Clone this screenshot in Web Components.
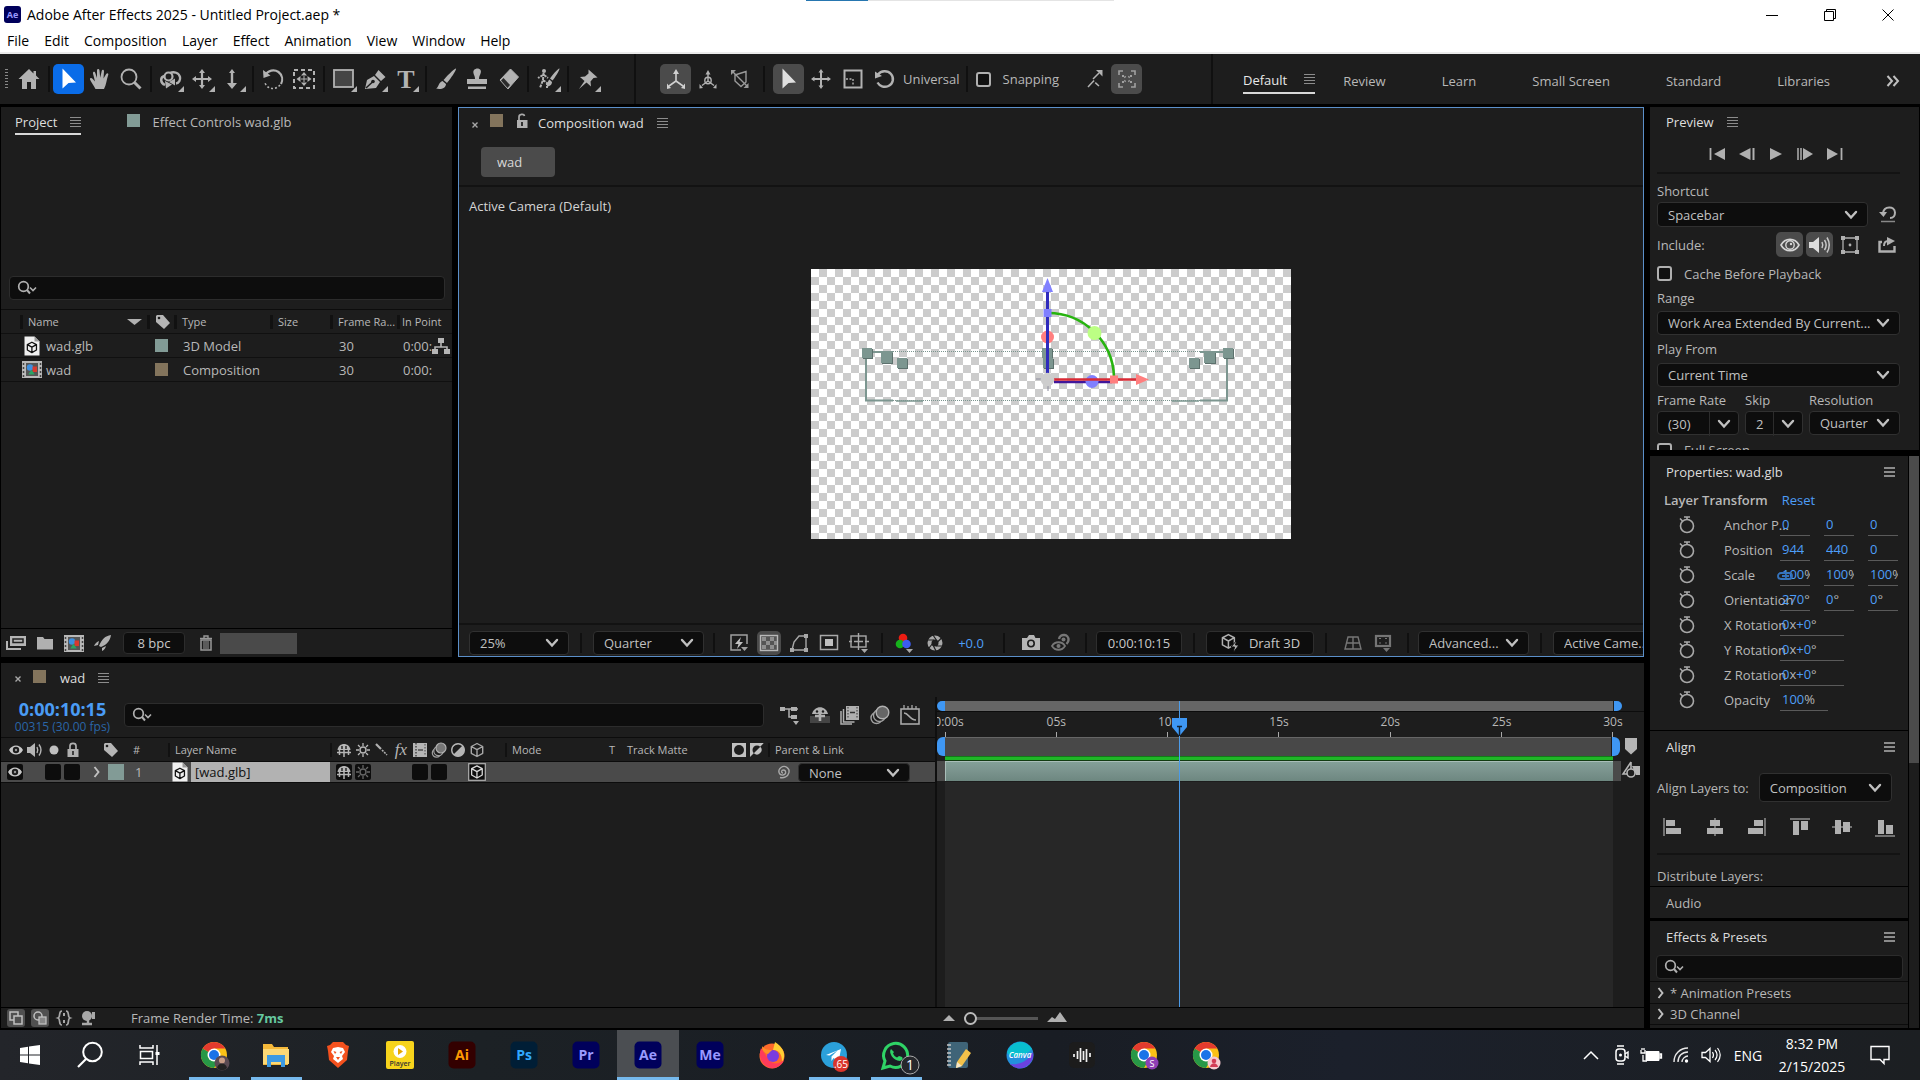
<!DOCTYPE html>
<html lang="en">
<head>
<meta charset="utf-8">
<title>Adobe After Effects 2025 - Untitled Project.aep *</title>
<style>
html,body{height:100%;margin:0}
body{background:#000;font-family:"Open Sans","Noto Sans",sans-serif;font-size:13px;color:#b8b8b8;overflow:hidden}
</style>
</head>
<body>
<ae-app></ae-app>
<script>
const BASE = `
*{box-sizing:border-box}
:host{display:block;min-width:0}
button,input,select{font:inherit;color:inherit;background:none;border:0;padding:0;margin:0;outline:0}
button{display:inline-flex;align-items:center;justify-content:center;white-space:nowrap}
ui-icon{flex:none}
`;
function define(name, css, html) {
  customElements.define(name, class extends HTMLElement {
    constructor() {
      super();
      this.attachShadow({ mode: 'open' });
    }
    connectedCallback() {
      const t = document.createElement('template');
      const body = typeof html === 'function' ? html(this) : html;
      t.innerHTML = `<style>${BASE}${css}</style>${body}`;
      this.shadowRoot.replaceChildren(t.content.cloneNode(true));
    }
  });
}

/* ---------- icons: [viewBox width, viewBox height, markup] ---------- */
const G = '#b2b2b2';
const more = `<path d="M27 21v6h-6z" fill="${G}"/>`;
const cube = (c, w = 1.4) => `<path d="M8 1.5l5.7 3v6.8L8 14.5l-5.7-3.2V4.500zM2.300 4.500L8 7.600l5.700-3.100M8 7.600v6.900" fill="none" stroke="${c}" stroke-width="${w}" stroke-linejoin="round"/>`;
const chromeMark = `<circle cx="14" cy="14" r="13" fill="#fbc116"/><path d="M14 14L2.700 7.500A13 13 0 0 0 14 27l5.600-9.700z" fill="#279847"/><path d="M14 14L2.700 7.500A13 13 0 0 1 25.300 7.500H14z" fill="#e33b2e"/><circle cx="14" cy="14" r="6.500" fill="#fff"/><circle cx="14" cy="14" r="5" fill="#1a73e8"/>`;
const adobe = (t, bg, fg) => `<rect x=".5" y=".5" width="27" height="27" rx="5" fill="${bg}"/><text x="14" y="19" text-anchor="middle" font-size="14" font-weight="700" fill="${fg}">${t}</text>`;
const film = `<rect x="0" y="0" width="20" height="17" fill="#b8b8b8"/><rect x="4" y="2" width="12" height="13" fill="#555"/><path d="M1.500 2v14M18.500 2v14" stroke="#444" stroke-width="1.500" stroke-dasharray="2 2"/><circle cx="8" cy="6.500" r="3.200" fill="#3d8fe0"/><rect x="10.500" y="5.500" width="4.500" height="5.500" fill="#d8392e"/><path d="M9.500 8.500l3.200 5H6.300z" fill="#2ba363"/>`;
const ICONS = {
  home: [28,28,`<path d="M14 4L3.500 14H7v10h5v-7h4v7h5V14h3.500L21 10.500V6h-2.500v2.500z" fill="${G}"/>`],
  cursor: [28,28,`<path d="M7.500 3.500l13.500 14-7.500.5-6 5.500z" fill="currentColor"/>`],
  hand: [28,28,`<path d="M9.500 24C7.500 20 5 17 4 14.500c-.5-1.500 1.500-2 2.500-.8L9 16.500 7 8.500c-.4-2 1.800-2.500 2.300-.6L11 13 11 5.500c0-2 2.300-2 2.500 0l.7 7.200L15.700 6c.4-1.800 2.500-1.400 2.300.5L17.500 13.500 20.200 9c1-1.500 2.700-.6 2 1C20.500 15 20.500 19 18 24z" fill="${G}"/>`],
  zoom: [28,28,`<circle cx="12" cy="12" r="7.500" fill="none" stroke="${G}" stroke-width="1.800"/><path d="M17.500 17.500l6 6" stroke="${G}" stroke-width="3"/>`],
  orbit: [28,28,`<path d="M8 20C3 18 3 12 7.500 11M13 8c4-2 9 0 10 4 .6 3-1 6-4 6.500" fill="none" stroke="${G}" stroke-width="2.400"/><circle cx="11.500" cy="11.500" r="4" fill="none" stroke="${G}" stroke-width="2.200"/><path d="M12 17l6-3.500v7zM8 16l7 3.500-6 4z" fill="${G}"/>`+more],
  pan: [28,28,`<path d="M14 6v16M6 14h16" stroke="${G}" stroke-width="2.200"/><path d="M14 4l3 4h-6zM14 24l3-4h-6zM4 14l4-3v6zM24 14l-4-3v6z" fill="${G}"/>`+more],
  dolly: [28,28,`<path d="M13 6v14" stroke="${G}" stroke-width="2.400"/><path d="M13 4l3 4h-6zM13 24l5-6H8z" fill="${G}"/>`+more],
  rotate: [28,28,`<path d="M6.500 10C9 5.500 15 4 19.500 7c4 3 4.500 8 2.500 12" fill="none" stroke="${G}" stroke-width="2.200"/><path d="M4 5l.5 8 7-2.500z" fill="${G}"/><path d="M21 20c-4 5-12 5-15-2" fill="none" stroke="${G}" stroke-width="1.600" stroke-dasharray="2 2"/>`],
  anchor: [28,28,`<rect x="4" y="5" width="20" height="18" fill="none" stroke="${G}" stroke-width="2" stroke-dasharray="4 3"/><path d="M14 7l3 3.500h-6zM14 21l3-3.500h-6zM6.500 14l4-3v6zM21.500 14l-4-3v6z" fill="${G}"/><path d="M14 11v6M11 14h6" stroke="${G}"/>`],
  rect: [28,28,`<rect x="4" y="5" width="19" height="17" fill="#454545" stroke="${G}" stroke-width="1.800"/>`+more],
  pen: [28,28,`<path d="M4 24l2-9 7-4 6 6-4 6zM14 10l3.500-5 7 7-4.500 4z" fill="${G}"/><path d="M5 23l6.500-6" stroke="#1d1d1d" stroke-width="1.500"/><circle cx="12" cy="16.500" r="1.800" fill="#1d1d1d"/>`+more],
  type: [28,28,`<text x="14" y="23" text-anchor="middle" font-family="Liberation Serif,serif" font-size="26" font-weight="700" fill="${G}">T</text>`+more],
  brush: [28,28,`<path d="M24 3.500c1 1-7 12.500-9 14.500l-3.500-3C13.500 12.500 23 2.500 24 3.500zM10.500 16l3.500 3c0 4-5 6-10 4.500 3-1 2-6 6.500-7.500z" fill="${G}"/>`],
  stamp: [28,28,`<path d="M11 5c2-2 5-2 6.500 0 1.500 3-1.500 5-1.500 9h8v5H4v-5h8c0-4-3-6-1-9zM5 21.500h18v2.500H5z" fill="${G}"/>`],
  eraser: [28,28,`<path d="M16.500 4l8 8-10.500 12-8-9z" fill="${G}" stroke="${G}" stroke-linejoin="round"/><path d="M9.500 13l6.500 7-2.500 3-6.500-7.500z" fill="#2a2a2a"/>`],
  roto: [28,28,`<circle cx="10" cy="6" r="2" fill="${G}"/><path d="M9.500 8L9 15l-3 8M9 15l4 3v5M9 10l-5 3M10 10l4 3" fill="none" stroke="${G}" stroke-width="2" stroke-dasharray="3 1"/><path d="M25.500 3.500c.5 1-5 10-7 12l-2.500-2C17.500 11 24.500 3 25.500 3.500zM15.500 14.500l2.500 2.500c0 3-3 5-6 4.500 2-1 1-5 3.500-7z" fill="${G}"/>`+more],
  pin: [28,28,`<path d="M14.500 4.500l9 8-4 .5-3 3.500.5 5-4.500-4L5 24l5.500-8L6 12l5-.5 3.500-3z" fill="${G}"/>`+more],
  axisA: [28,28,`<path d="M14 7v9L7 21M14 16l7 5" fill="none" stroke="#d0d0d0" stroke-width="1.600"/><path d="M14 4l3 5h-6zM5 24v-5.500l4 4.500zM23 24v-5.500l-4 4.500z" fill="#d0d0d0"/>`],
  axisB: [28,28,`<path d="M14 7v9L8 20.500M14 16l6 4.500" fill="none" stroke="${G}" stroke-width="1.400"/><circle cx="14" cy="15.500" r="3.200" fill="none" stroke="${G}" stroke-width="1.400"/><path d="M14 5l2.500 4.500h-5zM5.500 23.500V19l3.500 4zM22.500 23.500V19L19 23z" fill="${G}"/>`],
  axisC: [28,28,`<path d="M7 7l7 7M9 10l11-3.500v10.500l-5 4.500-6-5.500zM14 14l7 7" fill="none" stroke="#9a9a9a" stroke-width="1.400"/><path d="M5 5h5L5 10zM22.500 23h-5l5-5z" fill="#9a9a9a"/>`],
  move: [28,28,`<path d="M14 6v16M6 14h16" stroke="${G}" stroke-width="2"/><path d="M14 4l2.500 3.500h-5zM14 24l2.500-3.500h-5zM4 14l3.500-2.500v5zM24 14l-3.500-2.500v5z" fill="${G}"/>`],
  scale: [28,28,`<rect x="5.500" y="5.500" width="17" height="17" fill="none" stroke="${G}" stroke-width="2"/><path d="M7 14h7v7" fill="none" stroke="${G}" stroke-width="1.400" stroke-dasharray="2 1.500"/>`],
  rot: [28,28,`<path d="M7 9.500c3-4 9.500-4.500 13-.5s2 10-2.500 12-9 0-11-3.500" fill="none" stroke="${G}" stroke-width="2.400"/><path d="M4 6.500v7l7-2.500z" fill="${G}"/>`],
  snapA: [28,28,`<path d="M7 22l5.500-6 5.500 5M12 14l6-6" fill="none" stroke="${G}" stroke-width="1.500" stroke-dasharray="9 1.500"/><path d="M21.500 5v6.500L15 5z" fill="${G}"/>`],
  snapB: [28,28,`<path d="M6 10V6h4M18 6h4v4M22 18v4h-4M10 22H6v-4" fill="none" stroke="#a0a0a0" stroke-width="1.600"/><path d="M9 11h2M17 11h2M9 17h2M17 17h2M11.500 11.500l1 1M16.500 11.500l-1 1M11.500 16.500l1-1M16.500 16.500l-1-1" stroke="#a0a0a0" stroke-width="1.800"/>`],
  menu: [11,10,`<path d="M0 .5h11M0 3.500h11M0 6.500h11M0 9.500h11" stroke="#8c8c8c" stroke-width="1"/>`],
  menu3: [11,10,`<path d="M0 1h11M0 5h11M0 9h11" stroke="#b0b0b0" stroke-width="1.300"/>`],
  chev: [14,10,`<path d="M2 2l5 5.500L12 2" fill="none" stroke="#c0c0c0" stroke-width="2.400" stroke-linecap="round"/>`],
  caret: [8,12,`<path d="M1.500 1l4 5-4 5" fill="none" stroke="#c0c0c0" stroke-width="1.900"/>`],
  dbl: [14,12,`<path d="M1.500 1l4.500 5-4.500 5M7.500 1L12 6l-4.500 5" fill="none" stroke="#c0c0c0" stroke-width="2"/>`],
  search: [20,16,`<circle cx="6.500" cy="6.500" r="4.800" fill="none" stroke="#b0b0b0" stroke-width="1.700"/><path d="M10 10l3 3.500" stroke="#b0b0b0" stroke-width="2"/><path d="M13 7.500l3 3 3-3" fill="none" stroke="#b0b0b0" stroke-width="1.600"/>`],
  close: [8,8,`<path d="M1.500 1.500l5 5M6.500 1.500l-5 5" stroke="#a8a8a8" stroke-width="1.400"/>`],
  lockOpen: [12,16,`<path d="M3 8V4c0-3 5-3.500 5.500-1" fill="none" stroke="#aaa" stroke-width="1.700"/><rect x="1" y="7" width="10.500" height="8" fill="#b0b0b0"/><path d="M6 9v4" stroke="#222" stroke-width="1.800"/>`],
  lock: [12,16,`<path d="M3 8V4c0-3.500 6-3.500 6 0v4" fill="none" stroke="#b0b0b0" stroke-width="1.700"/><rect x="0.500" y="7" width="11" height="8" fill="#b0b0b0"/><path d="M6 9v4" stroke="#222" stroke-width="1.600"/>`],
  sortDown: [16,8,`<path d="M0 1h15L7.500 7z" fill="#b0b0b0"/>`],
  tag: [16,16,`<path d="M1 2l1-1h6l7 8-6 6-8-7z" fill="#b5b5b5"/><circle cx="4" cy="4" r="1.300" fill="#1d1d1d"/>`],
  doc: [16,20,`<path d="M.5.500h10l5 5v14H.5z" fill="#f0f0f0"/><path d="M10.500.500v5h5z" fill="#999"/><g transform="translate(1.500 5) scale(.8)">${cube('#111',1.600)}</g>`],
  film: [20,17,film],
  flow: [18,18,`<path d="M9 5v5M3 14v-4h12v4" fill="none" stroke="#b5b5b5" stroke-width="1.600"/><path d="M6 1h6v5H6zM0 12h6v5H0zM12 12h6v5h-6z" fill="#b5b5b5"/>`],
  interpret: [22,16,`<path d="M1 15V6h2v7h13v2z" fill="#b5b5b5"/><rect x="5" y="1" width="16" height="10" fill="#b5b5b5"/><rect x="8" y="4" width="10" height="3.500" fill="none" stroke="#222" stroke-width="1.500"/>`],
  folder: [18,14,`<path d="M1 1h6l1.500 2H17v10.500H1z" fill="#b0b0b0"/>`],
  rocket: [18,16,`<path d="M17 0c-6 1-9 4-12 11l2 1C13 9.500 16 6 17 0zM5 6C2 7 1 9 0 11l4-1zM12 11c-1 3-2 4-4 5v-3z" fill="#b0b0b0"/>`],
  trash: [14,16,`<path d="M1 3.500h12M5 3V1h4v2" fill="none" stroke="#999" stroke-width="1.400"/><path d="M2 5h10v10H2z" fill="none" stroke="#999" stroke-width="1.500"/><path d="M5 6v8M7 6v8M9 6v8" stroke="#999"/>`],
  first: [16,12,`<path d="M1.500 0v12" stroke="#b0b0b0" stroke-width="1.800"/><path d="M16 0v12L5 6z" fill="#b0b0b0"/>`],
  prev: [16,12,`<path d="M14.500 0v12" stroke="#b0b0b0" stroke-width="2"/><path d="M11.500 0v12L0 6z" fill="#b0b0b0"/>`],
  play: [14,12,`<path d="M1 0v12l12-6z" fill="#b0b0b0"/>`],
  next: [16,12,`<path d="M1 0v12M4 0v12" stroke="#b0b0b0" stroke-width="1.500"/><path d="M6 0v12l10-6z" fill="#b0b0b0"/>`],
  last: [16,12,`<path d="M14.500 0v12" stroke="#b0b0b0" stroke-width="1.800"/><path d="M0 0v12l11-6z" fill="#b0b0b0"/>`],
  reset: [18,17,`<path d="M4 7c1-7 11.500-7.500 12-.5 0 3.500-2 5.500-5 5.500" fill="none" stroke="#b0b0b0" stroke-width="2"/><path d="M0 6h8l-3.500 5z" fill="#b0b0b0"/><path d="M2 15.500h14" stroke="#888" stroke-width="1.500"/>`],
  eyeBig: [20,14,`<path d="M1 7c4-7.500 14-7.500 18 0-4 7.500-14 7.500-18 0z" fill="none" stroke="#d5d5d5" stroke-width="1.600"/><circle cx="10" cy="7" r="4.200" fill="none" stroke="#d5d5d5" stroke-width="1.400"/><circle cx="11" cy="6" r="1.200" fill="#d5d5d5"/>`],
  sound: [22,18,`<path d="M0 6h4l6-5v16l-6-5H0z" fill="#dcdcdc"/><path d="M13 6c1 2 1 4 0 6M15.500 4c2 3 2 7 0 10M18 1.500c3 5 3 10 0 15" fill="none" stroke="#c8c8c8" stroke-width="1.500"/>`],
  bounds: [20,20,`<path d="M3 1v18M17 1v18M1 3h18M1 17h18" stroke="#b0b0b0" stroke-width="1.300"/><path d="M1 1h4v4H1zM15 1h4v4h-4zM1 15h4v4H1zM15 15h4v4h-4z" fill="#b0b0b0"/><circle cx="10" cy="10" r="1.400" fill="#b0b0b0"/>`],
  share: [18,16,`<path d="M4 5H1.500v9.500h15V9" fill="none" stroke="#b0b0b0" stroke-width="2.400"/><path d="M6 9c0-3 1-5 4-5" fill="none" stroke="#b0b0b0" stroke-width="2"/><path d="M9 0l8 4-8 4.500z" fill="#b0b0b0"/>`],
  watch: [18,18,`<circle cx="9" cy="10" r="6.500" fill="none" stroke="#a8a8a8" stroke-width="1.600"/><path d="M6 1h6M9 1v3M2 2.500l2.500 2.500" stroke="#a8a8a8" stroke-width="1.600"/>`],
  link: [17,10,`<path d="M8 2H4a3 3 0 0 0 0 6h4M6 2h6a3 3 0 0 1 0 6H7M5 5h7" fill="none" stroke="#3573bb" stroke-width="1.800"/>`],
  alL: [20,20,`<path d="M2 1v18" stroke="#999" stroke-width="1.400"/><path d="M4 3h9v6H4zM4 11h15v6H4z" fill="#b0b0b0"/>`],
  alC: [20,20,`<path d="M10 1v18" stroke="#999" stroke-width="1.400"/><path d="M5 3h10v6H5zM2 11h16v6H2z" fill="#b0b0b0"/>`],
  alR: [20,20,`<path d="M18 1v18" stroke="#999" stroke-width="1.400"/><path d="M7 3h9v6H7zM1 11h15v6H1z" fill="#b0b0b0"/>`],
  alT: [20,20,`<path d="M0 2h20" stroke="#999" stroke-width="1.400"/><path d="M3 4h6v14H3zM11 4h7v9h-7z" fill="#b0b0b0"/>`],
  alM: [20,20,`<path d="M0 10h20" stroke="#999" stroke-width="1.400"/><path d="M3 3h6v14H3zM11 5h7v10h-7z" fill="#b0b0b0"/>`],
  alB: [20,20,`<path d="M0 19h20" stroke="#999" stroke-width="1.400"/><path d="M3 3h6v14H3zM11 8h7v9h-7z" fill="#b0b0b0"/>`],
  fast: [20,20,`<path d="M12 17H2V2h16v9" fill="none" stroke="#a0a0a0" stroke-width="1.500"/><path d="M12 4L6 11h3.500L8 16l6-7h-3.500z" fill="#c0c0c0"/><path d="M12 14h7l-3.500 4z" fill="#a0a0a0"/>`],
  grid: [20,20,`<rect x="1.500" y="2.500" width="17" height="15" fill="#555" stroke="#b8b8b8" stroke-width="1.400"/><path d="M3 4h4v4H3zM11 4h4v4h-4zM7 8h4v4H7zM15 8h3v4h-3zM3 12h4v4H3zM11 12h4v4h-4z" fill="#8f8f8f"/>`],
  mask: [20,20,`<path d="M3 17l2-8 5-6h7v14z" fill="none" stroke="#a8a8a8" stroke-width="1.400"/><path d="M1 15h4v4H1zM15 1h4v4h-4zM15 15h4v4h-4z" fill="#a8a8a8"/>`],
  roi: [20,20,`<rect x="1.500" y="2.500" width="17" height="14" fill="none" stroke="#a8a8a8" stroke-width="1.500"/><rect x="6" y="6" width="8" height="7" fill="#c0c0c0"/>`],
  guides: [20,20,`<rect x="2" y="3" width="15" height="11" fill="none" stroke="#a8a8a8" stroke-width="1.400"/><path d="M9.500 0v17M5 8.500h9M0 8.500h3M16 8.500h4" stroke="#a8a8a8" stroke-width="1.400"/><path d="M12 16h7l-3.500 4z" fill="#a8a8a8"/>`],
  rgb: [20,20,`<circle cx="8" cy="5" r="4.300" fill="#ec1c12"/><circle cx="5" cy="11" r="4.300" fill="#16b21b"/><circle cx="11.500" cy="11" r="4.300" fill="#3c5cf0"/><path d="M11 16h7l-3.500 4z" fill="#a8a8a8"/>`],
  aperture: [20,20,`<circle cx="10" cy="10" r="5.500" fill="none" stroke="#a8a8a8" stroke-width="4"/><path d="M8 2l4 6M16.500 5l-5 5M17 13l-6 0M11 18l-3-6M4 15l4-5M3 7h6" stroke="#1d1d1d" stroke-width="1.200"/>`],
  camera: [20,20,`<path d="M1 5h5l2-3h5l1.500 3H19v12H1z" fill="#b5b5b5"/><circle cx="10" cy="10.500" r="3.200" fill="none" stroke="#1d1d1d" stroke-width="1.600"/>`],
  snap2: [20,20,`<path d="M1 13c3-5 10-5 13 0-3 5-10 5-13 0z" fill="none" stroke="#777" stroke-width="1.800"/><circle cx="7.500" cy="13" r="2" fill="#777"/><path d="M8 6c1-6 10-5 9.500 1 0 2-1 3-2 4" fill="none" stroke="#777" stroke-width="2.400"/><circle cx="12.500" cy="6.500" r="2" fill="#777"/>`],
  ground: [20,20,`<path d="M5 4h10l3 12H2zM10 4v12M3 10h14" fill="none" stroke="#757575" stroke-width="1.400"/>`],
  ext: [20,20,`<rect x="3" y="3" width="14" height="10" fill="none" stroke="#757575" stroke-width="2.200"/><path d="M6 5.500h2M12 5.500h2M6 10h2M12 10h2" stroke="#757575"/><path d="M10 15h7l-3.500 4z" fill="#757575"/>`],
  draft: [20,20,`<g transform="scale(1.050)">${cube('#b0b0b0')}</g><path d="M17 7l-6 7h3.500L13 20l6-8h-3.500z" fill="#b0b0b0" stroke="#0d0d0d"/>`],
  mini: [22,20,`<path d="M1 4h6M7 4h6M13 4h6M10 4v8h3M10 12h8" fill="none" stroke="#b0b0b0" stroke-width="1.500"/><path d="M1 2h5v4H1zM12 2h6v4h-6zM12 10h6v4h-6z" fill="#b0b0b0"/><path d="M14 16h6l-3 4z" fill="#b0b0b0"/>`],
  shy: [20,20,`<path d="M0 11h20v7H0z" fill="#444"/><path d="M2 9c2-9 14-9 16 0z" fill="#b0b0b0"/><path d="M10 3v13M5 11h10" stroke="#b0b0b0" stroke-width="2.600"/><circle cx="7" cy="6.500" r="1.200" fill="#1d1d1d"/><circle cx="13" cy="6.500" r="1.200" fill="#1d1d1d"/>`],
  blend: [20,20,`<path d="M1 6v13h11M3.500 4v13h11" fill="none" stroke="#b0b0b0" stroke-width="1.500"/><rect x="6" y="1" width="13" height="14" fill="#b0b0b0"/><path d="M8 2v12M17 2v12" stroke="#333" stroke-dasharray="1.500 1.500"/><path d="M10 7.500h5" stroke="#333" stroke-width="1.500"/>`],
  blur: [20,20,`<circle cx="6.500" cy="13" r="5.500" fill="none" stroke="#a0a0a0" stroke-width="1.400"/><circle cx="9.500" cy="10.500" r="6" fill="#1d1d1d" stroke="#a0a0a0" stroke-width="1.400"/><circle cx="12.500" cy="7.500" r="6.300" fill="#666" stroke="#b0b0b0" stroke-width="1.400"/>`],
  blurS: [16,16,`<circle cx="5.500" cy="11" r="4.200" fill="none" stroke="#a0a0a0" stroke-width="1.200"/><circle cx="7.500" cy="9" r="4.700" fill="#1d1d1d" stroke="#a0a0a0" stroke-width="1.200"/><circle cx="10" cy="6" r="5" fill="#777" stroke="#b0b0b0" stroke-width="1.200"/>`],
  graph: [22,22,`<rect x="2" y="5" width="18" height="15" fill="none" stroke="#a8a8a8" stroke-width="1.600"/><path d="M5 9c5 0 5 7 12 7" fill="none" stroke="#a8a8a8" stroke-width="1.700"/><path d="M5 1v4M9 2v3M13 1v4M17 2v3" stroke="#a8a8a8" stroke-width="1.300"/>`],
  eye: [14,14,`<path d="M0 7c3-6 11-6 14 0-3 6-11 6-14 0z" fill="#c8c8c8"/><circle cx="7" cy="7" r="3.200" fill="#1d1d1d"/><circle cx="7" cy="7" r="1.200" fill="#999"/>`],
  spk: [16,14,`<path d="M0 4h3l5-4v14l-5-4H0z" fill="#b5b5b5"/><path d="M10 4c1 2 1 4 0 6M12 1.500c2.500 3.500 2.500 7.500 0 11" fill="none" stroke="#b5b5b5" stroke-width="1.400"/>`],
  dot: [10,10,`<circle cx="5" cy="5" r="4.500" fill="#c0c0c0"/>`],
  shyS: [16,16,`<path d="M1.500 8c1-8 12-8 13 0z" fill="#b5b5b5"/><path d="M8 5v10M1 10.500h14M3.500 8v5M12.500 8v5" stroke="#b5b5b5" stroke-width="1.500"/><path d="M6 4v3M10 4v3" stroke="#1d1d1d" stroke-width="1.400"/>`],
  sun: [16,16,`<circle cx="8" cy="8" r="3" fill="none" stroke="currentColor" stroke-width="1.400"/><path d="M8 1v3M8 12v3M1 8h3M12 8h3M3 3l2 2M11 11l2 2M13 3l-2 2M5 11l-2 2" stroke="currentColor" stroke-width="1.300"/>`],
  slash: [16,16,`<path d="M2 2l5 5" stroke="#b0b0b0" stroke-width="2.200"/><path d="M8 8l5 5" stroke="#b0b0b0" stroke-width="1.600" stroke-dasharray="2 1"/>`],
  fx: [16,16,`<text x="8" y="13" text-anchor="middle" font-family="Liberation Serif,serif" font-style="italic" font-size="17" fill="#b5b5b5">fx</text>`],
  blendS: [16,16,`<path d="M1 1h14v14H1z" fill="#b5b5b5"/><path d="M4 1v14" stroke="#444" stroke-width="1.500" stroke-dasharray="1.500 1.500"/><path d="M13 2v12" stroke="#444" stroke-dasharray="1.500 1.500"/><path d="M6 8h5" stroke="#444" stroke-width="1.400"/>`],
  half: [16,16,`<circle cx="8" cy="8" r="6.500" fill="#b5b5b5"/><path d="M3.500 12.600A6.500 6.500 0 0 1 12.600 3.400z" fill="#1d1d1d"/><circle cx="8" cy="8" r="6.300" fill="none" stroke="#b5b5b5" stroke-width="1.400"/>`],
  cube: [16,16,cube('#a8a8a8')],
  cubeOn: [18,18,`<rect x=".7" y=".7" width="16.600" height="16.600" fill="#0d0d0d" stroke="#b0b0b0" stroke-width="1.200"/><g transform="translate(1.500 1.500) scale(.930)">${cube('#d8d8d8')}</g>`],
  matteA: [16,16,`<rect x="1" y="1" width="14" height="14" fill="#c0c0c0"/><circle cx="8" cy="8" r="5" fill="#1d1d1d"/>`],
  matteB: [16,16,`<path d="M1 1h14L1 15z" fill="#c0c0c0"/><path d="M15 1v14H3z" fill="#1d1d1d"/><circle cx="8" cy="8" r="4.500" fill="#1d1d1d"/><path d="M11.300 4.700a4.600 4.600 0 0 1-6.500 6.500z" fill="#c0c0c0"/>`],
  spiral: [16,16,`<path d="M8 9c-2 0-2-3 .5-3s3.500 4.500-.5 5-6-4.500-2-7.500 9 1 8 5-5 6-9 5" fill="none" stroke="#a8a8a8" stroke-width="1.300"/>`],
  marker: [14,18,`<path d="M1 1h12v11l-6 5.500L1 12z" fill="#b5b5b5"/>`],
  keyShape: [18,18,`<path d="M9 1L1 13h7M9 1v7" fill="none" stroke="#b5b5b5" stroke-width="1.600"/><path d="M10 5h8v9h-4z" fill="#b5b5b5"/><circle cx="9" cy="12" r="4" fill="#1d1d1d" stroke="#b5b5b5" stroke-width="1.600"/>`],
  head: [15,18,`<path d="M0 0h15v9l-7.500 9L0 9z" fill="#3f97f3"/><path d="M5 8.500h5M7.500 9v9" stroke="#123" stroke-width="1.400"/>`],
  bt1: [18,18,`<rect width="18" height="18" rx="3" fill="#505050"/><rect x="3" y="3" width="8" height="8" fill="none" stroke="#c0c0c0" stroke-width="1.500"/><rect x="7" y="7" width="8" height="8" fill="#505050" stroke="#c0c0c0" stroke-width="1.500"/>`],
  bt2: [18,18,`<rect width="18" height="18" rx="3" fill="#505050"/><circle cx="7" cy="7" r="4" fill="none" stroke="#c0c0c0" stroke-width="1.500"/><rect x="8" y="8" width="7" height="7" fill="#888" stroke="#c0c0c0" stroke-width="1.300"/>`],
  bt3: [18,18,`<path d="M7 2C3 2 6 8 3 9c3 1 0 7 4 7M11 2c4 0 1 6 4 7-3 1 0 7-4 7" fill="none" stroke="#a8a8a8" stroke-width="1.700"/><path d="M9 4v3M9 11v3" stroke="#a8a8a8" stroke-width="2"/>`],
  bt4: [18,18,`<circle cx="8" cy="7" r="5" fill="#a8a8a8"/><path d="M3 15h10M9 10v5" stroke="#a8a8a8" stroke-width="2.400"/><path d="M13 3h3v7h-3" fill="#a8a8a8"/>`],
  mtS: [12,8,`<path d="M0 7l6-6 6 6z" fill="#b0b0b0"/>`],
  mtL: [20,12,`<path d="M0 10l5-5 3 2 5-7 7 10z" fill="#b0b0b0"/>`],
  ae16: [17,17,`<rect width="17" height="17" rx="3" fill="#00005b"/><text x="8.500" y="12" text-anchor="middle" font-size="9" font-weight="700" fill="#9999ff">Ae</text>`],
  winMin: [12,12,`<path d="M0 6.500h12" stroke="#000"/>`],
  winMax: [12,12,`<path d="M.5 2.500h9v9h-9zM2.500 2V.5h9v9H10" fill="none" stroke="#000"/>`],
  winX: [12,12,`<path d="M.5.500l11 11M11.500.500l-11 11" stroke="#000"/>`],
  start: [20,20,`<path d="M0 3l8-1.200V9.500H0zM9 1.600L20 0v9.500H9zM0 10.500h8v7.700L0 17zM9 10.500h11V20L9 18.400z" fill="#fff"/>`],
  tsearch: [28,28,`<circle cx="16.500" cy="11" r="9.300" fill="none" stroke="#fff" stroke-width="2"/><path d="M10 18l-8 8" stroke="#fff" stroke-width="2.200"/>`],
  tview: [22,22,`<path d="M1 1v3h13V1M1 21v-3h13v3M1.500 7.500h12v7h-12zM18 1v20" fill="none" stroke="#fff" stroke-width="1.500"/><path d="M16.500 8h4v3h-4z" fill="#fff"/>`],
  chrome1: [28,28,chromeMark+`<circle cx="22" cy="22" r="7.500" fill="#5a4a52"/><circle cx="22" cy="19.500" r="3" fill="#c89c86"/><path d="M17 27c1-6 9-6 10 0-3 3-7 3-10 0z" fill="#222"/>`],
  explorer: [28,28,`<path d="M1 3h9l2 3h14v18H1z" fill="#f5b93a"/><path d="M1 8h26v15H1z" fill="#fcd976"/><path d="M5 14h18v12h-4v-5H9v5H5z" fill="#3d9ae2"/>`],
  brave: [28,28,`<path d="M9 1h10l3 3 3 1-1 5-1 9-9 8-9-8-1-9-1-5 3-1z" fill="#f4511e"/><path d="M14 6l5 1 2 4-3 4 1 3-5 4-5-4 1-3-3-4 2-4z" fill="#fff"/><path d="M9.500 10l3 1-1.500 2zM18.500 10l-3 1 1.500 2zM12 16h4l-2 3z" fill="#f4511e"/>`],
  player: [28,28,`<rect width="28" height="28" rx="2" fill="#f7d41c"/><circle cx="14" cy="10.500" r="6.500" fill="#fff"/><path d="M12 7v7l5-3.500z" fill="#e5a800"/><text x="14" y="24.500" text-anchor="middle" font-size="7" font-weight="600" fill="#333">Player</text>`],
  ai: [28,28,adobe('Ai','#330000','#ff9a00')], ps: [28,28,adobe('Ps','#001e36','#31a8ff')],
  pr: [28,28,adobe('Pr','#00005b','#9999ff')], ae: [28,28,adobe('Ae','#00005b','#9999ff')], me: [28,28,adobe('Me','#00005b','#9999ff')],
  firefox: [28,28,`<circle cx="14" cy="15" r="12.500" fill="#ff6a2b"/><path d="M17 1c8 5 12 13 7 20 0-8-3-12-9-12z" fill="#ffcf33"/><path d="M3 7c-3 8 0 17 9 20 7 1 12-3 14-8-5 5-12 4-15 0z" fill="#ff3b5b"/><circle cx="15" cy="15" r="6" fill="#7a3ce0"/><path d="M4 5c2 3 5 4 10 4l-4 4c-4-1-6-4-6-8z" fill="#ff9226"/>`],
  telegram: [28,28,`<circle cx="14" cy="14" r="13" fill="#2ba0da"/><path d="M6 14l15-6-2.500 13-5-4-2 3v-4.500l6-6-8 5z" fill="#fff"/><circle cx="21" cy="23" r="8" fill="#d9342b"/><text x="21" y="27" text-anchor="middle" font-size="10" fill="#fff">.65</text>`],
  whatsapp: [28,28,`<path d="M1 27l2-7A12 12 0 1 1 8 25z" fill="none" stroke="#2fd366" stroke-width="3"/><path d="M9 8c-3 3 2 12 9 12 3-1 3-3 2-4l-3-1-2 1.500c-2-1-3-2-4-4l1-1.500z" fill="#2fd366"/><circle cx="28" cy="24" r="9" fill="#26282c" stroke="#aaa"/><text x="28" y="29" text-anchor="middle" font-size="14" fill="#fff">1</text>`],
  note: [28,28,`<rect x="4" y="1" width="20" height="26" rx="2" fill="#3f6478"/><path d="M3 4h4M3 8h4M3 12h4M3 16h4M3 20h4M3 24h4" stroke="#c8c8c8" stroke-width="1.600"/><path d="M22 8l5 4-9 13-6 2 1-6z" fill="#f2c14a"/><path d="M13 21l5 4-6 2z" fill="#f5e6c8"/>`],
  canva: [28,28,`<circle cx="14" cy="14" r="13.500" fill="#2390dd"/><path d="M1 12A13.500 13.500 0 0 1 26 8C18 16 8 18 1 12z" fill="#08bfcf"/><path d="M4 23A13.500 13.500 0 0 0 27 11C22 20 14 24 4 23z" fill="#6a42e0"/><text x="14" y="17" text-anchor="middle" font-size="8" font-style="italic" font-weight="600" fill="#fff">Canva</text>`],
  wave: [28,28,`<rect x="1" y="1" width="26" height="26" rx="5" fill="#1c1c1c"/><path d="M6 13v3M9.500 10v8M12.500 7v14M15.500 10v9M18.500 8v13M22 12v4" stroke="#f0f0f0" stroke-width="1.700"/>`],
  chrome2: [28,28,chromeMark+`<circle cx="22" cy="22" r="6.500" fill="#8e3fb5"/><text x="22" y="25.500" text-anchor="middle" font-size="9" fill="#fff">S</text>`],
  chrome3: [28,28,chromeMark+`<circle cx="22" cy="22" r="6.500" fill="#f6c9cf"/><circle cx="22" cy="20" r="2.300" fill="#d23b55"/><path d="M18 26c1-5 7-5 8 0z" fill="#d23b55"/>`],
  up: [16,10,`<path d="M1 9l7-7 7 7" fill="none" stroke="#fff" stroke-width="1.500"/>`],
  meet: [16,20,`<rect x="3" y="4" width="9" height="12" rx="3" fill="none" stroke="#fff" stroke-width="1.500"/><path d="M12 9l3-2v6l-3-2M4 1h7M4 19h7" fill="none" stroke="#fff" stroke-width="1.400"/><circle cx="7.500" cy="10" r="1.500" fill="#fff"/>`],
  batt: [22,16,`<path d="M6 4.500h13v9H6z" fill="#fff" stroke="#fff"/><path d="M20 7h1.500v4H20zM3 8V14h4M1 3v3h4V3M2 1v2M4 1v2" fill="none" stroke="#fff" stroke-width="1.300"/>`],
  wifi: [18,18,`<path d="M2 16C2 8 8 2 16 2M6 16c0-6 4-10 10-10M10 16c0-3 3-6 6-6" fill="none" stroke="#e8e8e8" stroke-width="1.400"/><circle cx="14.500" cy="15" r="1.700" fill="#fff"/>`],
  vol: [20,18,`<path d="M1 6.500h3.500L9 2.500v13l-4.500-4H1z" fill="none" stroke="#fff" stroke-width="1.300"/><path d="M11.500 6c1.300 2 1.300 4 0 6M14 4c2.500 3 2.500 7 0 10M16.500 2c3.500 4.500 3.500 9.500 0 14" fill="none" stroke="#fff" stroke-width="1.200"/>`],
  notif: [20,20,`<path d="M1 1.500h18v13h-5v4l-4-4H1z" fill="none" stroke="#fff" stroke-width="1.400"/>`]
};
define('ui-icon', `:host{display:inline-block;line-height:0}svg{display:block;overflow:visible}`, el => {
  const [w, h, m] = ICONS[el.getAttribute('name')];
  return `<svg width="${w}" height="${h}" viewBox="0 0 ${w} ${h}" aria-hidden="true">${m}</svg>`;
});
const ic = n => `<ui-icon name="${n}"></ui-icon>`;

/* ---------- small controls ---------- */
define('ui-select', `
label{display:flex;align-items:center;height:var(--lab,26px);padding-top:var(--lp,0px)}
.box{display:grid;grid-template-columns:minmax(0,1fr) auto;align-items:center;height:var(--h,24px);background:#0d0d0d;border:1px solid #303030;border-radius:4px}
select{appearance:none;grid-area:1/1/2/3;width:100%;height:100%;padding-left:10px;color:#c0c0c0;white-space:nowrap}
ui-icon{grid-area:1/2;padding-right:9px;pointer-events:none}
:host([split]) ui-icon{border-left:1px solid #2c2c2c;padding:7px 7px}
:host([flush]) .box{border-right:0;border-radius:4px 0 0 4px}`,
el => {
  const l = el.getAttribute('label');
  return `${el.hasAttribute('show') ? `<label for="s">${l}</label>` : ''}<div class="box"><select id="s" aria-label="${l}"><option>${el.getAttribute('value')}</option></select>${el.hasAttribute('flush') ? '' : ic('chev')}</div>`;
});
define('ui-search', `
.box{display:flex;align-items:center;height:24px;gap:4px;padding-left:7px;background:#0d0d0d;border:1px solid #2c2c2c;border-radius:4px}
input{flex:1;min-width:0;height:100%}`,
el => `<div class="box">${ic('search')}<input type="text" aria-label="${el.getAttribute('label')}"></div>`);
define('ui-check', `
label{display:flex;align-items:center;gap:12px;white-space:nowrap}
input{appearance:none;width:15px;height:15px;border:2px solid #b0b0b0;border-radius:3px;background:#111;flex:none}`,
`<label><input type="checkbox"><slot></slot></label>`);
define('ui-tab', `
:host{flex:none}
.t{display:flex;align-items:center;gap:13px;height:22px;margin-top:4px}
:host([line]) .t{border-bottom:2px solid #d8d8d8;height:24px}
:host([on]){color:#dedede}`,
el => `<div class="t"><button><slot></slot></button>${el.hasAttribute('menu') ? ic('menu') : ''}</div>`);

/* ---------- window chrome ---------- */
define('ae-titlebar', `
:host{background:#fff;color:#000;font-size:14px}
.bar{display:grid;grid-template-columns:1fr auto;height:29px;align-items:center}
.name{display:flex;align-items:center;gap:6px;padding-left:4px}
.win{display:flex;padding-right:3px}
.win button{width:58px;height:28px}
nav{display:flex;gap:1px;height:25px;border-bottom:2px solid #ebebeb}
nav button{padding:0 7px}
.load{position:absolute;top:0;left:42%;width:16%;height:1px;background:linear-gradient(90deg,#2676b0 20%,#e4e4e4 20%)}`,
`<div class="bar"><div class="name">${ic('ae16')}<span>Adobe After Effects 2025 - Untitled Project.aep *</span></div>
<div class="win"><button aria-label="Minimize">${ic('winMin')}</button><button aria-label="Restore">${ic('winMax')}</button><button aria-label="Close">${ic('winX')}</button></div></div>
<nav>${['File','Edit','Composition','Layer','Effect','Animation','View','Window','Help'].map(t => `<button>${t}</button>`).join('')}</nav><div class="load"></div>`);

const tool = (n, c = '') => `<button class="tool ${c}" aria-label="${n}">${ic(n)}</button>`;
const gap = `<i class="sep"></i>`;
define('ae-toolbar', `
:host{display:grid;grid-template-columns:636px 577px minmax(0,1fr);height:50px;background:#1d1d1d}
.g{display:flex;align-items:center;border-right:2px solid #101010;min-width:0}
.g:last-child{border:0}
.grip{width:3px;height:20px;margin:0 5px;background:repeating-linear-gradient(#888 0 1px,#1d1d1d 1px 3px)}
.tool{width:31px;height:30px;border-radius:5px}
.blue{background:#0a6ce8;color:#fff}
.on{background:#4b4b4b;color:#e0e0e0}
.sep{width:9px;height:26px;background:linear-gradient(#101010,#101010) center/2px 100% no-repeat}
.wide{width:18px}
.mid{padding-left:24px}
.mid .tool+.tool{margin-left:1px}
.word{padding:0 3px}
.mid ui-check{padding:0 20px 0 4px}
.ws{padding-left:30px;gap:56px;align-items:stretch}
.ws button{height:40px;padding-top:13px}
.def{display:flex;align-items:center;height:40px;gap:17px;border-bottom:2px solid #d8d8d8;color:#e8e8e8;margin-right:-28px}
.def ui-icon{padding-top:12px}`,
`<div class="g"><i class="grip"></i>${tool('home')}${gap}${tool('cursor','blue')}${tool('hand')}${tool('zoom')}${gap}${tool('orbit')}${tool('pan')}${tool('dolly')}${gap}${tool('rotate')}${tool('anchor')}${gap}${tool('rect')}${tool('pen')}${tool('type')}${gap}${tool('brush')}${tool('stamp')}${tool('eraser')}${gap}${tool('roto')}${gap}${tool('pin')}</div>
<div class="g mid">${tool('axisA','on')}${tool('axisB')}${tool('axisC')}<i class="sep wide"></i>${tool('cursor','on')}${tool('move')}${tool('scale')}${tool('rot')}<button class="word">Universal</button>${gap}<ui-check>Snapping</ui-check>${tool('snapA')}${tool('snapB','on')}</div>
<div class="g ws"><span class="def"><button>Default</button>${ic('menu')}</span><button>Review</button><button>Learn</button><button>Small Screen</button><button>Standard</button><button>Libraries</button><button aria-label="More workspaces">${ic('dbl')}</button></div>`);

/* ---------- project panel ---------- */
define('ae-project', `
:host{display:flex;flex-direction:column;background:#1d1d1d;margin-left:1px;overflow:hidden}
.tabs{display:flex;gap:46px;padding-left:14px;height:169px}
.fx{display:flex;gap:12px}
.sw{width:13px;height:13px;background:#829b96}
.fx .sw{margin-top:7px}
ui-search{margin:0 7px 9px 8px}
table{table-layout:fixed;border-collapse:collapse;width:100%;border-top:1px solid #0c0c0c}
th,td{height:24px;padding:0 0 0 8px;text-align:left;font-weight:400;white-space:nowrap;overflow:hidden;border-bottom:1px solid #101010}
th{font-size:11px;background:linear-gradient(#111,#111) left center/3px 14px no-repeat}
td{font-size:13px;padding-left:9px}
.row{display:flex;align-items:center;justify-content:space-between;padding-right:4px}
td .row{justify-content:flex-start;gap:6px;padding:0}
td .sw{margin-left:-1px}
th ui-icon{vertical-align:middle}
th:last-child{padding-left:5px}
td:last-child{padding:0 3px 0 6px}
td:last-child .row{justify-content:space-between;gap:0}
.foot{display:flex;align-items:center;height:29px;margin-top:auto;border-top:1px solid #000}
.foot button{width:29px;height:22px}
.foot .bpc{width:62px;background:#0d0d0d;border:1px solid #2c2c2c;border-radius:4px;margin:0 6px;color:#c8c8c8}
.thumb{width:77px;height:21px;background:#4a4a4a}`,
`<div class="tabs"><ui-tab on line menu>Project</ui-tab><div class="fx"><i class="sw"></i><ui-tab>Effect Controls wad.glb</ui-tab></div></div>
<ui-search label="Search project"></ui-search>
<table><colgroup><col style="width:19px"><col style="width:127px"><col style="width:27px"><col style="width:96px"><col style="width:60px"><col style="width:67px"><col></colgroup>
<thead><tr><th style="background:none"></th><th><div class="row">Name ${ic('sortDown')}</div></th><th>${ic('tag')}</th><th>Type</th><th>Size</th><th>Frame Ra...</th><th>In Point</th></tr></thead>
<tbody><tr><td></td><td style="padding-left:4px"><div class="row">${ic('doc')}wad.glb</div></td><td><div class="sw"></div></td><td>3D Model</td><td></td><td>30</td><td><div class="row">0:00:${ic('flow')}</div></td></tr>
<tr><td></td><td style="padding-left:2px"><div class="row">${ic('film')}<span style="margin-left:-2px">wad</span></div></td><td><div class="sw" style="background:#83745c"></div></td><td>Composition</td><td></td><td>30</td><td>0:00:</td></tr></tbody></table>
<div class="foot"><button aria-label="Interpret footage">${ic('interpret')}</button><button aria-label="New folder">${ic('folder')}</button><button aria-label="New composition">${ic('film')}</button><button aria-label="Project settings">${ic('rocket')}</button><button class="bpc">8 bpc</button><button aria-label="Delete">${ic('trash')}</button><i class="thumb"></i></div>`);

/* ---------- composition viewer ---------- */
const sq = (x, y, w = 10) => `<rect x="${x + 1}" y="${y + 1}" width="${w}" height="${w}" fill="#5d716d"/><rect x="${x}" y="${y}" width="${w}" height="${w}" fill="#7c9690"/>`;
define('ae-canvas', `
:host{width:480px;height:270px;background:repeating-conic-gradient(#ccc 0 25%,#fff 0 50%) 0 0/16px 16px}
svg{display:block}`,
`<svg width="480" height="270" viewBox="0 0 480 270" aria-hidden="true">
<g fill="none" stroke="#7c9690"><path d="M55 88v43.500h27M416 88v43.500h-27M61 83h21M389 83h24" stroke-width="2"/><path d="M85 132h27M361 132h27" stroke-width="1.500"/><path d="M82 82.500h307M82 131.500h307" stroke-width="1" stroke-dasharray="1 1"/></g>
${sq(51,79)}${sq(70,83,11)}${sq(86,89)}${sq(231,79)}${sq(232,89)}${sq(412,79)}${sq(393,83,11)}${sq(378,89)}
<circle cx="236.500" cy="68" r="6.500" fill="#ff7f7f"/>
<path d="M237 44A66 66 0 0 1 303 108" fill="none" stroke="#27b40f" stroke-width="2.600"/><circle cx="283.500" cy="64" r="7" fill="#bcff84"/>
<path d="M236.500 22v83" stroke="#2f2bbd" stroke-width="3"/><path d="M236.500 9l5.500 14h-11z" fill="#8080ff"/><rect x="232.500" y="40" width="8" height="8" fill="#8080ff"/>
<path d="M243 113h58" stroke="#40179a" stroke-width="2.400"/><circle cx="281" cy="112.500" r="6.500" fill="#8080ff"/>
<path d="M243 110.500h83" stroke="#d92a35" stroke-width="2.600"/><path d="M338 110.500l-13-5.500v11z" fill="#ff7f7f"/><rect x="299" y="106.500" width="8" height="8" fill="#ff7f7f"/>
<path d="M225 110h8M237 115v7" stroke="#889" stroke-width="1"/><circle cx="236.500" cy="110.500" r="6.800" fill="#cdcdcd"/></svg>`);

const cell = (n, c = '') => `<button class="c ${c}" aria-label="${n}">${ic(n)}</button>`;
define('ae-viewer', `
:host{display:flex;flex-direction:column;background:#1d1d1d;border:1px solid #5b8fc9;overflow:hidden}
.tabs{display:flex;height:39px;padding-left:12px;color:#d5d5d5}
.tabs>button{align-self:flex-start;height:14px}
.x{margin-top:10px}.lk{margin:6px 10px 0 13px}
.tabs .sw{width:13px;height:13px;background:#83745c;margin:6px 0 0 11px}
.crumbs{height:40px;padding-left:22px;border-bottom:2px solid #121212}
.crumbs button{width:74px;height:30px;justify-content:flex-start;padding-left:16px;border-radius:4px;background:#4b4b4b;color:#d8d8d8}
.view{flex:1;display:grid;min-height:0;padding-bottom:3px}
.cap{grid-area:1/1;align-self:start;padding:9px 10px;line-height:20px;color:#d4d4d4}
ae-canvas{grid-area:1/1;place-self:center}
.foot{display:flex;align-items:center;height:33px;flex:none;padding:6px 0 1px 10px;border-top:2px solid #121212}
.foot>*{flex:none}
.c{width:30px;height:24px}
.foot i{height:20px;background:linear-gradient(#101010,#101010) center/2px 100% no-repeat}
.s{width:16px}.m{width:20px}.l{width:24px}
.on{width:24px;margin:0 3px;background:#4b4b4b;border-radius:5px}
.exp{width:42px;color:#4d9ef8}
.b{height:24px;background:#0d0d0d;border:1px solid #2e2e2e;border-radius:4px;color:#c8c8c8;gap:9px}`,
`<div class="tabs"><button class="x" aria-label="Close tab">${ic('close')}</button><i class="sw"></i><button class="lk" aria-label="Lock">${ic('lockOpen')}</button><ui-tab on menu>Composition wad</ui-tab></div>
<div class="crumbs"><button>wad</button></div>
<div class="view"><div class="cap">Active Camera (Default)</div><ae-canvas></ae-canvas></div>
<div class="foot"><ui-select style="width:100px" label="Magnification" value="25%"></ui-select><i class="l"></i><ui-select style="width:111px" label="Resolution" value="Quarter"></ui-select><i class="m"></i>
${cell('fast')}${cell('grid','on')}${cell('mask')}${cell('roi')}${cell('guides')}<i class="s"></i>${cell('rgb')}${cell('aperture')}<button class="exp">+0.0</button><i class="l"></i>${cell('camera')}${cell('snap2')}<i class="m"></i>
<button class="b" style="width:86px">0:00:10:15</button><i class="l"></i><button class="b" style="width:108px">${ic('draft')}Draft 3D</button><i class="l"></i>${cell('ground')}${cell('ext')}<i class="m"></i>
<ui-select style="width:111px" label="Renderer" value="Advanced..."></ui-select><i class="l"></i><ui-select style="width:104px" flush label="View" value="Active Came..."></ui-select></div>`);

/* ---------- right column ---------- */
define('ae-preview', `
:host{display:block;background:#1d1d1d;height:343px;overflow:hidden;padding:0 19px 0 7px}
.tabs{display:flex;padding-left:9px;height:33px}
.play{display:flex;justify-content:center;gap:14px;height:34px;align-items:center;border-bottom:2px solid #131313;padding:0 6px 5px 0}
.r{display:flex;align-items:flex-end;gap:8px}
.r>ui-select:first-child{flex:1;--lab:28px;--lp:5px;--h:25px}
.r>button{width:24px;height:25px}
.inc{display:flex;align-items:center;height:35px}
.inc span{flex:1}
.inc button{width:27px;height:25px;border-radius:5px;margin-left:3px}
.inc .on{background:#4b4b4b}.inc button:last-child{margin-left:10px}
.chk{height:23px;display:flex;align-items:center}
.pf{--lab:28px}
.three{display:grid;grid-template-columns:82px 58px minmax(0,1fr);gap:6px;--lab:24px;--lp:2px}
.fs{padding-top:6px}`,
`<div class="tabs"><ui-tab on menu>Preview</ui-tab></div>
<div class="play">${['first','prev','play','next','last'].map(n => `<button aria-label="${n}">${ic(n)}</button>`).join('')}</div>
<div class="r"><ui-select show label="Shortcut" value="Spacebar"></ui-select><button aria-label="Reset">${ic('reset')}</button></div>
<div class="inc"><span>Include:</span><button class="on" aria-label="Video">${ic('eyeBig')}</button><button class="on" aria-label="Audio">${ic('sound')}</button><button aria-label="Overlays">${ic('bounds')}</button><button aria-label="Loop">${ic('share')}</button></div>
<div class="chk"><ui-check>Cache Before Playback</ui-check></div>
<ui-select show label="Range" value="Work Area Extended By Current..."></ui-select>
<ui-select class="pf" show label="Play From" value="Current Time"></ui-select>
<div class="three"><ui-select split show label="Frame Rate" value="(30)"></ui-select><ui-select split show label="Skip" value="2"></ui-select><ui-select show label="Resolution" value="Quarter"></ui-select></div>
<div class="fs"><ui-check>Full Screen</ui-check></div>`);

define('ae-value', `
:host{height:22px;border-bottom:1px solid #5a5a5a;width:30px;display:flex;align-items:center;padding-left:2px;overflow:hidden;white-space:nowrap;color:#b4b4b4}
input{color:#4d9ef8;flex:none}`,
el => (el.getAttribute('v').match(/[+\d]+|[^+\d]+/g)).map(p => /\d/.test(p) ? `<input aria-label="${el.getAttribute('label')}" value="${p}" style="width:${p.length}ch">` : `<span>${p}</span>`).join(''));
const prop = (n, vals, w = 30) => `<div class="p"><button aria-label="Animate ${n}">${ic('watch')}</button><span class="n">${n}</span><div class="v">${vals.map(v => `<ae-value label="${n}" v="${v}" style="width:${w}px"></ae-value>`).join('')}${n === 'Scale' ? `<ui-icon class="lnk" name="link"></ui-icon>` : ''}</div></div>`;
define('ae-properties', `
:host{display:block;background:#1d1d1d;height:275px;border-bottom:1px solid #000}
.h{display:flex;justify-content:space-between;align-items:center;height:31px;padding:0 13px 0 16px;color:#dcdcdc}
.lt{display:flex;align-items:center;gap:14px;height:25px;padding-left:14px;font-weight:600}
.lt button{color:#4d9ef8;font-weight:400}
.p{display:grid;grid-template-columns:74px 56px minmax(0,1fr);height:25px;align-items:center}
.n{white-space:nowrap}
.v{display:flex;gap:14px;position:relative}
.lnk{position:absolute;left:-3px;top:7px}`,
`<div class="h">Properties: wad.glb ${ic('menu3')}</div><div class="lt">Layer Transform <button>Reset</button></div>
${prop('Anchor P...',['0','0','0'])}${prop('Position',['944','440','0'])}${prop('Scale',['100%','100%','100%'])}${prop('Orientation',['270°','0°','0°'])}${prop('X Rotation',['0x+0°'],64)}${prop('Y Rotation',['0x+0°'],64)}${prop('Z Rotation',['0x+0°'],64)}${prop('Opacity',['100%'],48)}`);

define('ae-align', `
:host{display:block;background:#1d1d1d;height:187px;overflow:hidden}
.h{display:flex;justify-content:space-between;align-items:center;height:32px;padding:0 13px 0 16px;color:#dcdcdc}
.to{display:flex;align-items:center;gap:10px;padding:10px 16px 0 7px}
.to ui-select{flex:1;--h:29px}
.ics{display:flex;justify-content:space-between;margin:0 8px 0 7px;padding:15px 5px 16px;border-bottom:2px solid #131313}
.d{height:32px;padding:11px 0 0 7px;line-height:20px;border-bottom:1px solid #000}
.a{height:31px;padding-left:16px;display:flex;align-items:center}`,
`<div class="h">Align ${ic('menu3')}</div><div class="to"><span>Align Layers to:</span><ui-select label="Align Layers to" value="Composition"></ui-select></div>
<div class="ics">${['alL','alC','alR','alT','alM','alB'].map(n => `<button aria-label="${n}">${ic(n)}</button>`).join('')}</div>
<div class="d">Distribute Layers:</div><div class="a">Audio</div>`);

define('ae-effects', `
:host{display:block;background:#1d1d1d;flex:1;margin-top:3px;overflow:hidden}
.h{display:flex;justify-content:space-between;align-items:center;height:32px;padding:0 13px 0 16px;color:#dcdcdc}
ui-search{margin:2px 5px 2px 6px}
.i{display:flex;width:100%;justify-content:flex-start;gap:5px;height:22px;padding-left:7px;border-top:1px solid #0c0c0c}
.i:last-child{border-bottom:1px solid #0c0c0c}`,
`<div class="h">Effects &amp; Presets ${ic('menu3')}</div><ui-search label="Search effects"></ui-search><button class="i">${ic('caret')}* Animation Presets</button><button class="i">${ic('caret')}3D Channel</button>`);

/* ---------- timeline ---------- */
define('ae-layers', `
:host{display:flex;flex-direction:column;border-right:2px solid #0f0f0f}
.top{display:grid;grid-template-columns:111px minmax(0,1fr) auto;height:40px;align-items:center}
.tc{display:flex;flex-direction:column;align-items:center;padding-left:12px;width:111px}
.tc b{font-size:18px;line-height:20px;font-weight:700;color:#4a9cf5}
.tc span{font-size:12px;line-height:16px;color:#2a66a8;white-space:nowrap}
ui-search{margin:0 0 4px 12px}
.ics{display:flex;padding:0 10px 4px 11px}
.ics button{width:30px;height:24px}
table{table-layout:fixed;border-collapse:collapse;width:100%}
th,td{padding:0;text-align:left;font-weight:400;white-space:nowrap;overflow:hidden}
th{height:24px;font-size:11px;border-top:1px solid #0c0c0c;border-bottom:1px solid #0c0c0c;background:linear-gradient(#111,#111) left center/2px 14px no-repeat}
th:first-child,th.nb{background:none}
td{height:20px;background:#4a4a4a;border-bottom:1px solid #0c0c0c}
.f{display:flex;align-items:center}
.f>*{flex:none}
.k{width:19px;display:flex;justify-content:center}
.b{width:16px;height:16px;background:#0d0d0d;border-radius:2px;margin:0 1px 0 2px;display:flex;align-items:center;justify-content:center}
.f .nm{flex:1;height:20px;background:#b2b2b2;color:#111;line-height:20px;font-size:13px;padding-left:4px}
td ui-select{--h:19px;width:112px}`,
`<div class="top"><div class="tc"><b>0:00:10:15</b><span>00315 (30.00 fps)</span></div><ui-search label="Search layers"></ui-search>
<div class="ics">${['mini','shy','blend','blur','graph'].map(n => `<button aria-label="${n}">${ic(n)}</button>`).join('')}</div></div>
<table><colgroup><col style="width:87px"><col style="width:40px"><col style="width:40px"><col style="width:162px"><col style="width:175px"><col style="width:95px"><col style="width:168px"><col></colgroup>
<thead><tr><th><div class="f" style="padding-left:5px">${['eye','spk','dot','lock'].map(n => `<span class="k">${ic(n)}</span>`).join('')}</div></th>
<th class="nb"><div class="f" style="padding-left:15px">${ic('tag')}</div></th><th class="nb"><span style="padding-left:5px">#</span></th><th><span style="padding-left:7px">Layer Name</span></th>
<th><div class="f" style="padding-left:4px">${['shyS','sun','slash','fx','blendS','blurS','half','cube'].map(n => `<span class="k">${ic(n)}</span>`).join('')}</div></th>
<th><span style="padding-left:7px">Mode</span></th><th class="nb"><div class="f" style="padding-left:9px"><span style="width:18px">T</span><span style="width:104px">Track Matte</span>${ic('matteA')}<span style="width:2px"></span>${ic('matteB')}</div></th><th><span style="padding-left:7px">Parent &amp; Link</span></th></tr></thead>
<tbody><tr><td><div class="f" style="padding-left:4px"><span class="b">${ic('eye')}</span><span class="k"></span><span class="b"></span><span class="b"></span></div></td>
<td><div class="f" style="padding-left:5px">${ic('caret')}<span style="width:7px"></span><span style="width:16px;height:16px;background:#829b96"></span></div></td><td><span style="padding-left:7px">1</span></td>
<td><div class="f" style="padding-left:4px">${ic('doc')}<span style="width:3px"></span><span class="nm">[wad.glb]</span></div></td>
<td><div class="f" style="padding-left:4px"><span class="b">${ic('shyS')}</span><span class="b" style="color:#666">${ic('sun')}</span><span class="k"></span><span class="k"></span><span class="b"></span><span class="b"></span><span class="k"></span><span class="k">${ic('cubeOn')}</span></div></td><td></td><td></td>
<td><div class="f" style="padding-left:7px">${ic('spiral')}<span style="width:7px"></span><ui-select label="Parent" value="None"></ui-select></div></td></tr></tbody></table>`);

define('ae-track', `
:host{position:relative;display:flex;flex-direction:column;overflow:hidden;--r:22px}
.row{display:flex;flex:none;padding-right:var(--r)}
.cap{width:8px;background:#3f97f3;border-radius:6px 0 0 6px}
.cap:last-child{border-radius:0 6px 6px 0;margin-left:1px}
.bar{flex:1}
.nav{margin-top:4px;height:11px;border-bottom:1px solid #0c0c0c}.nav .bar{background:#666}
.ruler{display:flex;justify-content:space-between;height:25px;margin:0 31px 0 8px;font-size:12px}
.ruler span{width:0;display:flex;flex-direction:column;align-items:center;justify-content:space-between;line-height:20px}
.ruler span:after{content:"";width:1px;height:5px;background:#aaa}
.ruler span:first-child{width:24px;margin:0 -16px 0 -8px}
.ruler span:first-child:after{margin-left:-8px}
.work{height:19px;padding-right:4px}.work .bar{background:#484848;border-top:1px solid #666}
.work ui-icon,.lay ui-icon{width:18px;display:flex;justify-content:center}
.work .cap.e{border-radius:0 6px 6px 0;margin-left:1px}
.work ui-icon{margin-left:2px}
.green{height:5px;margin:0 31px 0 8px;background:#1fb527;border-top:1px solid #117a17;border-bottom:1px solid #123c12}
.lay{height:20px;padding-right:4px}
.lay i{width:8px;background:#4a4a4a}.lay .bar{background:linear-gradient(#83a098 0,#7a938d 50%,#6d8780);border:1px solid #a9beb9;border-width:1px 0 0 1px}
.lay ui-icon{margin-left:1px}
.body{flex:1;margin:1px 31px 0 8px;background:#272727}
.ph{position:absolute;inset:0 31px 0 8px;pointer-events:none}
.ph div{position:absolute;left:35%;top:4px;bottom:0;width:1px;background:#4c9be8}
.ph ui-icon{position:absolute;left:-7px;top:17px}`,
`<div class="row nav"><i class="cap"></i><i class="bar"></i><i class="cap"></i></div>
<div class="ruler">${['0:00s','05s','10s','15s','20s','25s','30s'].map(t => `<span>${t}</span>`).join('')}</div>
<div class="row work"><i class="cap"></i><i class="bar"></i><i class="cap e"></i>${ic('marker')}</div>
<div class="green"></div>
<div class="row lay"><i></i><b class="bar"></b><i></i>${ic('keyShape')}</div><div class="body"></div>
<div class="ph"><div>${ic('head')}</div></div>`);

define('ae-timeline', `
:host{display:flex;flex-direction:column;background:#1d1d1d;margin-left:1px;overflow:hidden}
.tabs{display:flex;height:34px;padding-left:13px;color:#d5d5d5;flex:none}
.tabs>button{height:14px;margin-top:9px}
.sw{width:13px;height:13px;background:#83745c;margin:7px 14px 0 11px}
.main{flex:1;display:grid;grid-template-columns:936px minmax(0,1fr);min-height:0}
.foot{display:grid;grid-template-columns:936px minmax(0,1fr);height:21px;flex:none;border-top:1px solid #000}
.l,.r{display:flex;align-items:center;gap:6px;padding-left:6px}
.l p{margin:0 0 0 28px}
.l b{color:#66c9a0;font-weight:700}
.r{gap:9px}
input{appearance:none;width:74px;height:14px;background:linear-gradient(#555,#555) center/100% 3px no-repeat}
input::-webkit-slider-thumb{appearance:none;width:13px;height:13px;border:2px solid #bbb;border-radius:50%;background:#1d1d1d}`,
`<div class="tabs"><button aria-label="Close tab">${ic('close')}</button><i class="sw"></i><ui-tab on menu>wad</ui-tab></div>
<div class="main"><ae-layers></ae-layers><ae-track></ae-track></div>
<div class="foot"><div class="l">${ic('bt1')}${ic('bt2')}${ic('bt3')}${ic('bt4')}<p>Frame Render Time: <b>7ms</b></p></div><div class="r">${ic('mtS')}<input type="range" min="0" max="100" value="0" aria-label="Zoom">${ic('mtL')}</div></div>`);

/* ---------- taskbar ---------- */
define('ae-taskbar', `
:host{display:flex;height:50px;background:linear-gradient(90deg,#23252a,#1c2125 25%,#191d24 55%,#1b202b 70%,#1c1f22);color:#fff;font-size:14px;justify-content:space-between}
.l,.r{display:flex}
.l button{width:62px;height:50px}
.l button.n{width:60px}
.l button.n+.a{margin-left:3px}
.run{background:linear-gradient(#76b9ed,#76b9ed) center bottom/51px 3px no-repeat}
.act{background:linear-gradient(#76b9ed,#76b9ed) center bottom/100% 3px no-repeat,#4b4e52}
.r{align-items:center}
.r button{width:30px;height:50px}
.r .t{width:44px}.r .c{flex-direction:column;width:84px;line-height:23px}
.r .o{width:52px;margin-right:14px}`,
`<div class="l">${['start','tsearch','tview'].map(n => `<button class="n" aria-label="${n}">${ic(n)}</button>`).join('')}${[['chrome1','run'],['explorer','run'],['brave'],['player'],['ai'],['ps'],['pr'],['ae','act'],['me'],['firefox'],['telegram','run'],['whatsapp','run'],['note'],['canva'],['wave'],['chrome2'],['chrome3']].map(([n, c = '']) => `<button class="a ${c}" aria-label="${n}">${ic(n)}</button>`).join('')}</div>
<div class="r">${['up','meet','batt','wifi','vol'].map(n => `<button aria-label="${n}">${ic(n)}</button>`).join('')}<button class="t">ENG</button><button class="c"><span>8:32 PM</span><span>2/15/2025</span></button><button class="o" aria-label="Notifications">${ic('notif')}</button></div>`);

/* ---------- application shell ---------- */
define('ae-app', `
:host{display:flex;flex-direction:column;height:100vh}
.main{flex:1;display:grid;grid-template-columns:minmax(0,1fr) 269px;gap:6px;padding:3px 1px 2px 0;min-height:0}
.left{display:grid;grid-template-rows:minmax(0,1fr) 365px;gap:6px;min-height:0}
.up{display:grid;grid-template-columns:452px minmax(0,1fr);gap:6px;min-height:0}
.right{display:flex;flex-direction:column;gap:6px;min-height:0}
.low{flex:1;display:grid;grid-template-columns:minmax(0,1fr) 10px;gap:1px;min-height:0}
.stack{display:flex;flex-direction:column;min-height:0}
.sb{background:linear-gradient(#4b4b4b,#4b4b4b) top/100% 307px no-repeat #1d1d1d}`,
`<ae-titlebar></ae-titlebar><ae-toolbar></ae-toolbar>
<div class="main"><div class="left"><div class="up"><ae-project></ae-project><ae-viewer></ae-viewer></div><ae-timeline></ae-timeline></div>
<div class="right"><ae-preview></ae-preview><div class="low"><div class="stack"><ae-properties></ae-properties><ae-align></ae-align><ae-effects></ae-effects></div><div class="sb"></div></div></div></div>
<ae-taskbar></ae-taskbar>`);
</script>
</body>
</html>
